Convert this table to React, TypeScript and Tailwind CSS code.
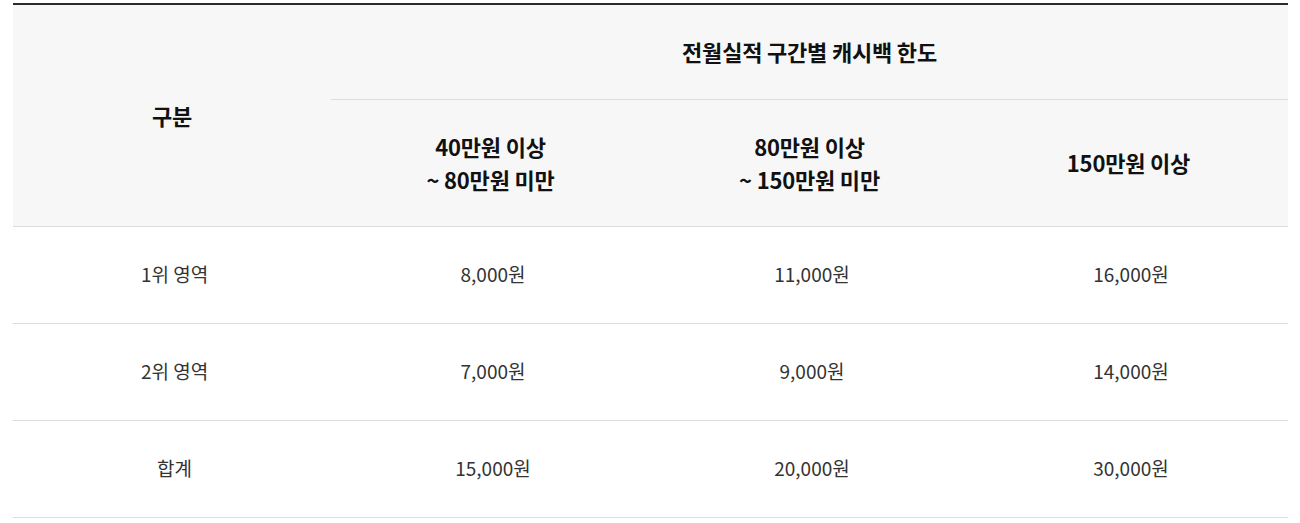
const rows = [
  { label: "1위 영역", values: ["8,000원", "11,000원", "16,000원"] },
  { label: "2위 영역", values: ["7,000원", "9,000원", "14,000원"] },
  { label: "합계", values: ["15,000원", "20,000원", "30,000원"] },
];

const fontStack = "font-['Noto_Sans_CJK_KR','Noto_Sans',sans-serif]";

export default function App() {
  return (
    <div className={`min-h-screen bg-white pt-[3px] pl-[13px] pr-[12px] ${fontStack}`}>
      <table className="w-full table-fixed border-collapse border-t-2 border-[#2b2b2b] text-center">
        <colgroup>
          <col className="w-[318px]" />
          <col />
          <col />
          <col />
        </colgroup>
        <thead className="bg-[#f7f7f7] text-[22px] font-bold text-[#111] tracking-[-0.2px]">
          <tr>
            <th rowSpan={2} className="border-b border-[#dddddd] align-middle">
              구분
            </th>
            <th colSpan={3} className="h-[95px] border-b border-[#dddddd] align-middle">
              전월실적 구간별 캐시백 한도
            </th>
          </tr>
          <tr className="leading-[33px]">
            <th className="h-[127px] border-b border-[#dddddd] align-middle">
              40만원 이상
              <br />~ 80만원 미만
            </th>
            <th className="border-b border-[#dddddd] align-middle">
              80만원 이상
              <br />~ 150만원 미만
            </th>
            <th className="border-b border-[#dddddd] align-middle">150만원 이상</th>
          </tr>
        </thead>
        <tbody className="text-[19px] text-[#333]">
          {rows.map((row) => (
            <tr key={row.label} className="h-[97px] border-b border-[#dddddd]">
              <td className="pl-[5px] align-middle">{row.label}</td>
              {row.values.map((v) => (
                <td key={v} className="pl-[5px] align-middle">
                  {v}
                </td>
              ))}
            </tr>
          ))}
        </tbody>
      </table>
    </div>
  );
}
